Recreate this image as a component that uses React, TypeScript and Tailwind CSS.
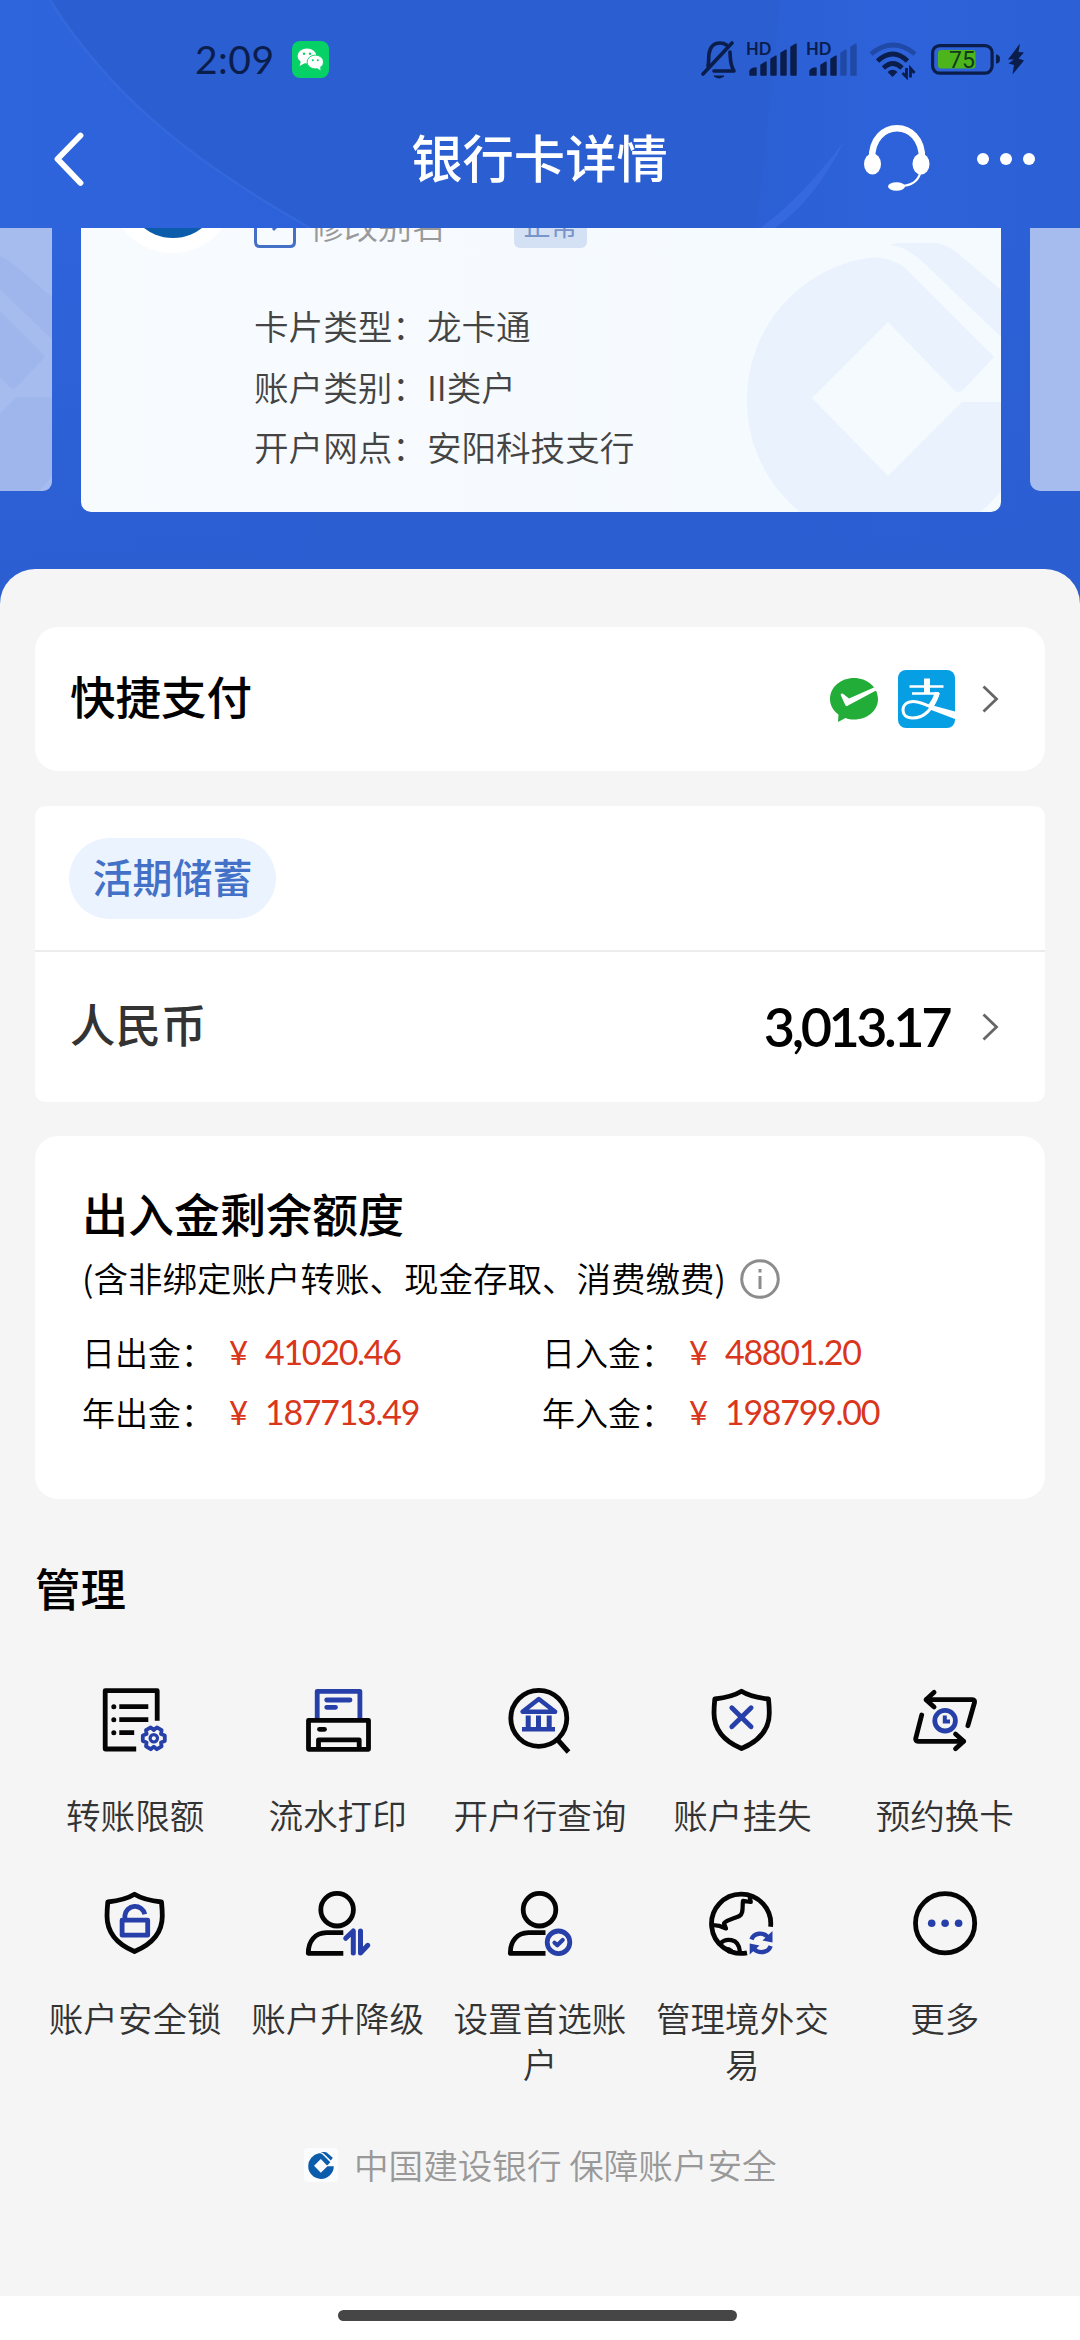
import type { ReactNode } from 'react'

const BLUE = '#263fa9'

const cardInfo = [
  { label: '卡片类型：', value: '龙卡通' },
  { label: '账户类别：', value: 'II类户' },
  { label: '开户网点：', value: '安阳科技支行' },
]

const limits = [
  { label: '日出金：', value: '41020.46' },
  { label: '日入金：', value: '48801.20' },
  { label: '年出金：', value: '187713.49' },
  { label: '年入金：', value: '198799.00' },
]

// CCB emblem, shared by the card watermarks and the footer
function BankMark({ className }: { className: string }) {
  return (
    <svg className={className} viewBox="745 243 290 302" fill="currentColor">
      <path d="M994 357 L905 268 C895 260 880 256 868 258 A143 143 0 0 0 747 400 A143 143 0 0 0 1033 402 L962 402 L888 476 L812 398 L888 322 L955 391 Q960 394 965 388 Z" />
      <path d="M890 245 C905 240 928 238 948 247 C958 252 965 260 1022 308 L1001 337 L925 264 Q906 246 890 245 Z" />
    </svg>
  )
}

function SignalIcon({ level }: { level: number }) {
  const bars = [
    'M3 37 V33 Q5 30 9 30 V37 Z',
    'M14 37 V27 L19 24 V37 Z',
    'M24 37 V21 L29 18 V37 Z',
    'M34 37 V15 L39 12 V37 Z',
    'M44 37 V9 L49 6 V37 Z',
  ]
  return (
    <svg className="h-[42px] w-[50px]" viewBox="0 0 50 42" fill="#0a1d4b">
      <text x="-1" y="17" fontSize="16.5" fontWeight="700" fontFamily="Lato, sans-serif">
        HD
      </text>
      {bars.map((d, i) => (
        <path
          key={d}
          d={d}
          stroke="#0a1d4b"
          strokeWidth="1.4"
          strokeLinejoin="round"
          opacity={i < level ? 1 : 0.35}
        />
      ))}
    </svg>
  )
}

function StatusBar() {
  return (
    <div className="flex h-[42px] items-center pr-[55px] pl-[195px] text-[#0a1d4b]">
      <span className="font-[Lato] text-[39px] leading-none tracking-[0.5px]">2:09</span>
      <svg className="ml-[17px] h-[37px] w-[37px]" viewBox="0 0 37 37">
        <rect width="37" height="37" rx="8" fill="#06d167" />
        <ellipse cx="15" cy="15" rx="9.5" ry="7.6" fill="#fff" />
        <path d="M9 20 L7.5 25 L13 22 Z" fill="#fff" />
        <ellipse cx="23.3" cy="21" rx="8.2" ry="6.9" fill="#fff" stroke="#06d167" strokeWidth="0.9" />
        <path d="M25 27 L28.5 29.5 L28 25 Z" fill="#fff" />
        <circle cx="12" cy="12.8" r="1.2" fill="#06d167" />
        <circle cx="18" cy="12.8" r="1.2" fill="#06d167" />
        <circle cx="20.8" cy="19.2" r="1" fill="#06d167" />
        <circle cx="25.8" cy="19.2" r="1" fill="#06d167" />
      </svg>

      <div className="ml-auto flex items-center">
        <svg className="h-[42px] w-[36px]" viewBox="0 0 36 42" fill="none" stroke="#0a1d4b" strokeWidth="3.6">
          <path d="M7 28 C8 24 7.5 20 8 16 C9 9 13 5 19 5 Q23 5 25.5 7" strokeLinecap="round" />
          <path d="M29 14 C29.5 22 29 27 33 33 H13" strokeLinecap="round" strokeLinejoin="round" />
          <path d="M31 5 L2 36" strokeLinecap="round" />
          <path d="M13 38 Q18 42 23 38 Z" fill="#0a1d4b" strokeWidth="1" />
        </svg>
        <div className="ml-[10px]">
          <SignalIcon level={5} />
        </div>
        <div className="ml-[10px]">
          <SignalIcon level={3} />
        </div>
        <svg className="ml-[12px] h-[42px] w-[48px]" viewBox="0 0 48 42" fill="none" stroke="#0a1d4b">
          <path d="M2 16 Q24 -2 46 16" strokeWidth="4.6" opacity="0.35" />
          <path d="M8.5 23 Q24 9 38.5 23" strokeWidth="4.8" />
          <path d="M14.5 30 Q24 21 33 30" strokeWidth="4.8" />
          <path d="M18.5 34 Q23.5 29.5 28.5 34 L23.5 39 Z" fill="#0a1d4b" stroke="none" />
          <path d="M33.5 35 L37.5 39 V30 M45.5 35 L41.5 30.5 V39.5" strokeWidth="2.8" />
        </svg>
        <svg className="ml-[14px] h-[42px] w-[70px]" viewBox="0 0 70 42">
          <rect x="1.6" y="7.6" width="59.5" height="27.5" rx="7" fill="none" stroke="#0a1d4b" strokeWidth="3.2" />
          <rect x="7" y="12" width="37.5" height="18.5" rx="3" fill="#4cb51c" />
          <path d="M65 16.5 Q69 16.5 69 21 Q69 25.5 65 25.5 Z" fill="#0a1d4b" />
          <text x="18" y="29.5" fontSize="23" fontFamily="Roboto, sans-serif" fill="#0f3a1c">
            75
          </text>
        </svg>
        <svg className="ml-[6px] h-[42px] w-[18px]" viewBox="0 0 18 42" fill="#0a1d4b">
          <path d="M13 5.5 L1 21.5 H7 L1.5 25.5 L7 27 L5.5 36.5 L17 22.5 L11.5 20.5 L17 14.5 L11.5 14 Z" />
        </svg>
      </div>
    </div>
  )
}

function NavBar() {
  return (
    <div className="mt-[10px] flex h-[138px] items-center justify-between pr-[44px] pl-[53px] text-white">
      <svg className="h-[56px] w-[136px]" viewBox="0 0 136 56" fill="none" stroke="currentColor">
        <path d="M27.5 4.5 L4.5 28 L27.5 52" strokeWidth="5.8" strokeLinecap="round" strokeLinejoin="round" />
      </svg>
      <h1 className="pb-[6px] pl-[27px] text-[51.3px] leading-none font-medium">银行卡详情</h1>
      <div className="flex items-center gap-[46px]">
        <svg className="h-[68px] w-[68px]" viewBox="0 0 68 68" fill="none" stroke="currentColor">
          <path d="M9 34 C8 -7 60 -7 59 34" strokeWidth="6.5" />
          <ellipse cx="9.5" cy="39" rx="8.5" ry="10.5" fill="currentColor" stroke="none" />
          <ellipse cx="58" cy="39" rx="8.5" ry="10.5" fill="currentColor" stroke="none" />
          <path d="M57.5 47 Q54 61 37 61" strokeWidth="2.2" />
          <ellipse cx="33.5" cy="61.5" rx="8.5" ry="4.2" fill="currentColor" stroke="none" />
        </svg>
        <div className="flex gap-[11px] pr-px">
          <span className="h-[12px] w-[12px] rounded-full bg-white" />
          <span className="h-[12px] w-[12px] rounded-full bg-white" />
          <span className="h-[12px] w-[12px] rounded-full bg-white" />
        </div>
      </div>
    </div>
  )
}

function CardCarousel() {
  return (
    <div className="flex h-[341px] items-start justify-between overflow-hidden">
      <div className="relative h-[263px] w-[52px] overflow-hidden rounded-br-[9px] bg-[#a6bcee]">
        <div className="absolute top-[26px] left-[-179px] text-[#9fb6ec]">
          <BankMark className="h-[272px] w-[261px]" />
        </div>
      </div>

      {/* the card is scrolled partly under the header */}
      <div className="relative -mt-[101px] flex h-[385px] w-[920px] overflow-hidden rounded-[10px] bg-linear-to-r from-[#f8fbfe] to-[#f4fafe]">
        <div className="absolute top-[116px] left-[664px] text-[#e9f2fd]">
          <BankMark className="h-[302px] w-[290px]" />
        </div>
        <div className="mt-[1px] ml-[29px] flex h-[125px] w-[125px] items-center justify-center rounded-full bg-white">
          <div className="h-[94px] w-[94px] rounded-full bg-[#0b5cab]" />
        </div>
        <div className="relative ml-[19px] pt-[74px]">
          <div className="flex items-center">
            <svg className="mt-[5px] h-[42px] w-[42px]" viewBox="0 0 42 42" fill="none" stroke="#4470c6" strokeWidth="3">
              <path d="M22 2 H6 Q1.5 2 1.5 6 V36 Q1.5 40.5 6 40.5 H36 Q40.5 40.5 40.5 36 V20" />
              <path d="M19 24 L38 4" />
            </svg>
            <span className="ml-[14px] text-[34px] leading-[46px] font-[350] text-[#999]">修改别名</span>
            <span className="ml-[68px] w-[73px] rounded-[6px] bg-[#d4e0f3] text-center text-[27px] leading-[46px] text-[#7795c9]">
              正常
            </span>
          </div>
          <div className="mt-[47px] text-[34.6px] leading-[60.5px] font-[350] text-[#444]">
            {cardInfo.map((row) => (
              <div key={row.label} className="flex">
                <span>{row.label}</span>
                <span>{row.value}</span>
              </div>
            ))}
          </div>
        </div>
      </div>

      <div className="h-[263px] w-[50px] rounded-bl-[10px] bg-[#a6bcee]" />
    </div>
  )
}

function Chevron() {
  return (
    <svg className="h-[28px] w-[17px]" viewBox="0 0 17 28" fill="none" stroke="#666" strokeWidth="2.8">
      <path d="M1.5 1.5 L14.5 14 L1.5 26.5" />
    </svg>
  )
}

function Icon({ children }: { children: ReactNode }) {
  return (
    <svg className="h-[72px] w-[72px]" viewBox="0 0 72 72" fill="none" stroke="#050505" strokeWidth="4.8">
      {children}
    </svg>
  )
}

const shield =
  'M35.5 7.3 C28 12 18 14 8.8 15 C8.3 20 8 24 8 29 C8 48 20 58 35.5 64.5 C51 58 63.3 48 63.3 29 C63.3 24 63 20 62.5 15 C53 14 43 12 35.5 7.3 Z'

const actions: { label: string; icon: ReactNode }[] = [
  {
    label: '转账限额',
    icon: (
      <>
        <path d="M58.2 36.7 V6.7 H6.2 V65 H37.2" strokeLinejoin="round" />
        <path d="M20.3 22.7 H49.3 M20.3 35.7 H49.3 M20.3 48.7 H35.2" />
        <path d="M14.8 22.7 h0.01 M14.8 35.7 h0.01 M14.8 48.7 h0.01" strokeLinecap="round" strokeWidth="5" />
        <g transform="translate(54.8 54.3)" stroke={BLUE} strokeWidth="3.8" strokeLinejoin="round">
          <path d="M11 -2.7 L11 2.7 L7.2 4.2 L7.8 8.1 L3.1 10.9 L0 8.3 L-3.1 10.9 L-7.8 8.1 L-7.2 4.2 L-11 2.7 L-11 -2.7 L-7.2 -4.2 L-7.8 -8.1 L-3.1 -10.9 L0 -8.3 L3.1 -10.9 L7.8 -8.1 L7.2 -4.2 Z" />
          <circle r="3.7" strokeWidth="3.2" />
        </g>
      </>
    ),
  },
  {
    label: '流水打印',
    icon: (
      <>
        <g stroke={BLUE}>
          <path d="M15.2 36 V7.3 H57.9 V36" strokeLinejoin="round" />
          <path d="M24.7 16 H48 M24.7 23.3 H33.5" strokeLinecap="round" />
        </g>
        <path d="M6.5 36.3 H66.5 V65.3 H6.5 Z" strokeLinejoin="round" />
        <path d="M17.5 45.3 H22.5" strokeLinecap="round" />
        <path d="M16.5 64 V55.8 H57.2 V64" strokeLinejoin="round" />
      </>
    ),
  },
  {
    label: '开户行查询',
    icon: (
      <>
        <circle cx="34.8" cy="34.3" r="28" />
        <path d="M52.5 54.5 L64.5 68" strokeWidth="5" />
        <g stroke={BLUE} strokeWidth="4.4">
          <path d="M34.8 15 L18.5 27.7 H51.2 Z" strokeLinejoin="round" />
          <path d="M24.2 31.5 V45 M34.5 31.5 V45 M45.2 31.5 V45" strokeWidth="5" />
          <path d="M18 45.3 H51" />
        </g>
      </>
    ),
  },
  {
    label: '账户挂失',
    icon: (
      <>
        <path d={shield} strokeLinejoin="round" />
        <path d="M25.8 23.7 L45.1 42.7 M45.1 23.7 L25.8 42.7" stroke={BLUE} strokeLinecap="round" />
      </>
    ),
  },
  {
    label: '预约换卡',
    icon: (
      <>
        <g strokeLinecap="round" strokeLinejoin="round">
          <path d="M17.5 15.7 H63.5 Q66 15.7 65.5 18.5 L58.9 41.7" />
          <path d="M25.1 8.3 L17 15.7 L25.1 23" />
          <path d="M12.7 31 L6.7 54.5 Q6.3 57.3 9 57.3 H54.5" />
          <path d="M46.5 50 L54.7 57.3 L46.5 64.7" />
        </g>
        <circle cx="36.1" cy="36.7" r="10.3" stroke={BLUE} />
        <path d="M35.8 31.5 V37.5 H41" stroke={BLUE} strokeWidth="4" />
      </>
    ),
  },
  {
    label: '账户安全锁',
    icon: (
      <>
        <path d={shield} strokeLinejoin="round" />
        <g stroke={BLUE}>
          <path d="M23.1 33.2 H48.7 V48.2 H23.1 Z" strokeLinejoin="round" />
          <path d="M25.9 33 V28.5 A10.1 10.1 0 0 1 45.8 27.2" />
        </g>
      </>
    ),
  },
  {
    label: '账户升降级',
    icon: (
      <>
        <circle cx="35.1" cy="22.7" r="16.3" />
        <path d="M41.3 45.7 H24.5 C13 46 6.3 54 6.3 66.3 H41.3" strokeLinejoin="round" />
        <path
          d="M43.7 51.3 L51.3 44 V66 M58.5 44 V66 L65.8 58.3"
          stroke={BLUE}
          strokeWidth="5"
          strokeLinecap="round"
          strokeLinejoin="round"
        />
      </>
    ),
  },
  {
    label: '设置首选账户',
    icon: (
      <>
        <circle cx="35.5" cy="22.7" r="16.3" />
        <path d="M41.5 45.7 H24.5 C13 46 6.3 54 6.3 66.3 H41.5" strokeLinejoin="round" />
        <g stroke={BLUE} strokeLinecap="round" strokeLinejoin="round">
          <circle cx="54.5" cy="55.3" r="11.3" />
          <path d="M50.5 55.7 L53.3 58.3 L58.7 53" strokeWidth="4.2" />
        </g>
      </>
    ),
  },
  {
    label: '管理境外交易',
    icon: (
      <>
        <path d="M64.6 39.8 A29.6 29.6 0 1 0 41 65.8" />
        <g strokeLinejoin="round" strokeWidth="4.2">
          <path d="M43.5 9 L44.8 15 L37 13.8 C36 20 38 26 33.5 29 C28.5 31.5 21 32.5 18 36.3 L20 41.5 L13 38.8 L7 38" />
          <path d="M13.8 57 C19 51 33 50 34 65" />
          <path d="M15 59 L24 61 L31 66 L22 66 Z" fill="#050505" strokeWidth="1" />
        </g>
        <g stroke={BLUE} strokeWidth="4.4">
          <path d="M45.5 52.5 C48 45.5 57 45 62 50" />
          <path d="M64.7 59 C62 66 53 67 48 62" />
          <path d="M66.5 44 V55.5 L56.5 53.5 Z" fill={BLUE} stroke="none" />
          <path d="M43.7 67.5 V56.5 L53.5 58.5 Z" fill={BLUE} stroke="none" />
        </g>
      </>
    ),
  },
  {
    label: '更多',
    icon: (
      <>
        <circle cx="36.1" cy="36.3" r="29.6" />
        <g fill={BLUE} stroke="none">
          <circle cx="22.7" cy="36.3" r="3.8" />
          <circle cx="36.1" cy="36.3" r="3.8" />
          <circle cx="49.6" cy="36.3" r="3.8" />
        </g>
      </>
    ),
  },
]

export default function App() {
  return (
    <div className="flex h-[2340px] w-[1080px] flex-col overflow-hidden bg-white font-['Noto_Sans_CJK_SC',sans-serif] text-black">
      <div className="relative h-[604px] shrink-0 bg-[#2b5ed1]">
        <svg className="absolute inset-0 h-[604px] w-[1080px]" viewBox="0 0 1080 604">
          <defs>
            <linearGradient id="glow" x1="0" x2="1" y1="0" y2="0">
              <stop offset="0" stopColor="#2e64dc" />
              <stop offset="1" stopColor="#2d61d9" />
            </linearGradient>
            <linearGradient id="right" x1="0" x2="1" y1="0" y2="0">
              <stop offset="0" stopColor="#2b5ed1" />
              <stop offset="0.5" stopColor="#2d62da" />
              <stop offset="1" stopColor="#2c60d5" />
            </linearGradient>
            <linearGradient id="down" x1="0" x2="0" y1="0" y2="1">
              <stop offset="0" stopColor="#2b5ed1" stopOpacity="0" />
              <stop offset="1" stopColor="#2b5ed1" />
            </linearGradient>
          </defs>
          <path d="M0 0 H50 C110 95 190 160 310 228 V600 H0 Z" fill="url(#glow)" />
          <path d="M780 0 H1080 V604 H700 Q760 240 780 0 Z" fill="url(#right)" />
          <path d="M50 0 C110 95 190 160 310 228" fill="none" stroke="#3a6ce0" strokeWidth="2.5" opacity="0.6" />
          <path d="M760 228 Q800 200 845 140 Q815 200 775 228 Z" fill="#3a6ce3" opacity="0.7" />
          <rect y="228" width="1080" height="376" fill="url(#down)" />
        </svg>
        <div className="relative pt-[38px]">
          <StatusBar />
          <NavBar />
          <CardCarousel />
        </div>
      </div>

      <main className="relative -mt-[35px] flex h-[1727px] shrink-0 flex-col rounded-t-[35px] bg-[#f5f5f5] px-[35px] pt-[58px]">
        <section className="flex h-[144px] shrink-0 items-center rounded-[23px] bg-white pr-[46px] pl-[35px]">
          <h2 className="pb-[6px] text-[45.5px] leading-none font-medium">快捷支付</h2>
          <svg className="ml-auto h-[46px] w-[50px]" viewBox="0 0 50 46">
            <path
              d="M25 2 C38 2 49 11 49 23 C49 35 38 43.5 25 43.5 C22 43.5 19 43 16.5 42 L9 46 L9.5 38.5 C4 34.5 1 29 1 23 C1 11 12 2 25 2 Z"
              fill="#22ac38"
            />
            <path d="M11.5 18.5 Q13 16.5 15 18.5 L20 22.5 L46 11 L48 14 L19 29.5 Q17 31 16 28.5 Z" fill="#fff" />
          </svg>
          <svg className="ml-[19px] h-[58px] w-[57px]" viewBox="0 0 57 58">
            <rect width="57" height="58" rx="8" fill="#079fe4" />
            <g fill="none" stroke="#fff">
              <path d="M29 8.5 V23" strokeWidth="6" />
              <path d="M11.5 16.5 H45.5 M14 23.5 H41" strokeWidth="2.6" />
              <path
                d="M40 22.5 C36 36 28 48 14.5 48 C8 48 5 44.5 5 40 C5 35 9 31.5 15.5 31.5 C22 31.5 29 35 36 38.5"
                strokeWidth="3"
              />
              <path d="M39.5 22.5 Q37 31 31.5 37.5" strokeWidth="5" />
            </g>
            <path d="M33 35 L57 41.5 V49 L32 39.5 Z" fill="#fff" />
          </svg>
          <div className="ml-[27px]">
            <Chevron />
          </div>
        </section>

        <section className="mt-[35px] flex h-[296px] shrink-0 flex-col rounded-[10px] bg-white">
          <div className="flex h-[146px] items-center border-b-2 border-[#ececec] pl-[34px]">
            <span className="flex h-[81px] w-[207px] items-center justify-center rounded-full bg-[#ebf3fe] pb-[4px] text-[40px] leading-none font-medium text-[#4371c7]">
              活期储蓄
            </span>
          </div>
          <div className="flex flex-1 items-center pr-[46px] pl-[35px]">
            <span className="pb-[6px] text-[45.5px] leading-none font-medium text-[#333]">人民币</span>
            <span className="ml-auto font-[Lato] text-[54px] leading-none font-semibold tracking-[-3.5px]">
              3,013.17
            </span>
            <div className="ml-[33px]">
              <Chevron />
            </div>
          </div>
        </section>

        <section className="mt-[34px] h-[363px] shrink-0 rounded-[23px] bg-white px-[47px] pt-[51px]">
          <h2 className="text-[46px] leading-[50px] font-medium">出入金剩余额度</h2>
          <div className="mt-[17px] flex h-[50px] items-center text-[34.5px]">
            <span className="pb-[2px] font-[350]">(含非绑定账户转账、现金存取、消费缴费)</span>
            <svg className="ml-[13px] h-[42px] w-[42px]" viewBox="0 0 42 42" fill="none" stroke="#8c8c8c" strokeWidth="3">
              <circle cx="21" cy="21" r="18.3" />
              <path d="M21 18 V31 M21 11 V14.5" />
            </svg>
          </div>
          <div className="mt-[18px] grid grid-cols-[460px_1fr] text-[33px] leading-[60px]">
            {limits.map((item) => (
              <div key={item.label} className="flex">
                <span className="w-[147px] font-[350]">{item.label}</span>
                <span className="w-[36px] font-[Lato] text-[33px] text-[#d9361b]">¥</span>
                <span className="font-[Lato] text-[34px] tracking-[-1.3px] text-[#d9361b]">{item.value}</span>
              </div>
            ))}
          </div>
        </section>

        <h2 className="mt-[63px] text-[45.5px] leading-[50px] font-medium">管理</h2>

        <div className="mt-[72px] -ml-px grid w-[1012px] grid-cols-5">
          {actions.map((action) => (
            <button key={action.label} className="flex min-h-[203px] flex-col items-center">
              <Icon>{action.icon}</Icon>
              <span className="mt-[35px] w-[174px] text-[34.6px] leading-[46px] font-[350] text-[#333]">
                {action.label}
              </span>
            </button>
          ))}
        </div>

        <footer className="mt-[51px] flex items-center pl-[269px] text-[#999]">
          <span className="flex h-[34px] w-[34px] items-center justify-center rounded-[4px] bg-[#fbfcfd] text-[#0b5cab]">
            <BankMark className="h-[27px] w-[26px]" />
          </span>
          <span className="ml-[16px] pb-[2px] text-[34.6px] leading-[46px] font-[350]">中国建设银行 保障账户安全</span>
        </footer>
      </main>

      <div className="flex flex-1 justify-center pt-[14px] pr-[6px]">
        <div className="h-[11px] w-[399px] rounded-full bg-[#464646]" />
      </div>
    </div>
  )
}
